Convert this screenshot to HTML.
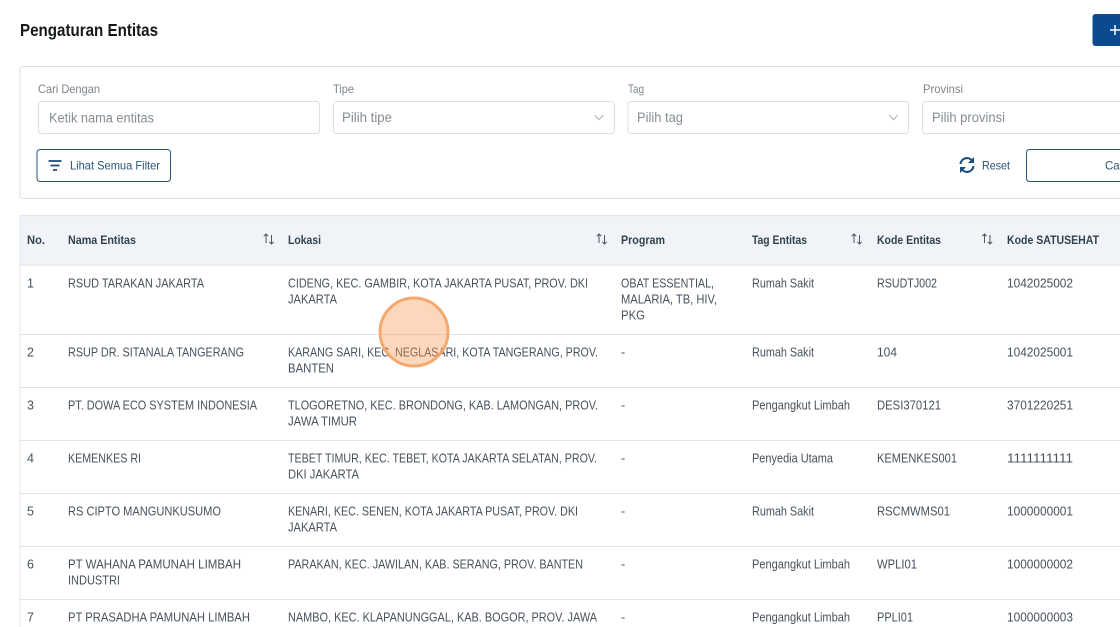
<!DOCTYPE html>
<html><head><meta charset="utf-8"><style>
html,body{margin:0;padding:0;background:#fff;width:1120px;height:627px;overflow:hidden}
svg{display:block;filter:blur(.3px)}
text{font-family:"Liberation Sans",sans-serif}
.t{font-size:12.5px;fill:#47525c}
.h{font-size:12px;font-weight:bold;fill:#33414e}
.l{font-size:12px;fill:#7d858c}
.p{font-size:13.5px;fill:#868d93}
.b{font-size:12px;fill:#2a5478}
</style></head><body>
<svg width="1120" height="627" viewBox="0 0 1120 627" xmlns="http://www.w3.org/2000/svg">
<text x="20" y="36" font-size="17.5" font-weight="bold" fill="#16191c" textLength="138" lengthAdjust="spacingAndGlyphs">Pengaturan Entitas</text>
<rect x="1092.5" y="14" width="60" height="32" rx="3" fill="#0b4a8c"/>
<path d="M1115 25v10M1110 30h10" stroke="#fff" stroke-width="1.5" fill="none"/>

<rect x="20" y="66.5" width="1140" height="132" rx="3" fill="#fff" stroke="#dcdfe2"/>
<text class="l" x="38" y="93" textLength="62" lengthAdjust="spacingAndGlyphs">Cari Dengan</text>
<text class="l" x="333" y="93" textLength="21" lengthAdjust="spacingAndGlyphs">Tipe</text>
<text class="l" x="628" y="93" textLength="16" lengthAdjust="spacingAndGlyphs">Tag</text>
<text class="l" x="923" y="93" textLength="40" lengthAdjust="spacingAndGlyphs">Provinsi</text>
<rect x="38.5" y="101.5" width="281" height="32" rx="3" fill="#fff" stroke="#dcdfe2"/>
<rect x="333.5" y="101.5" width="281" height="32" rx="3" fill="#fff" stroke="#dcdfe2"/>
<rect x="628" y="101.5" width="280.5" height="32" rx="3" fill="#fff" stroke="#dcdfe2"/>
<rect x="922.5" y="101.5" width="280" height="32" rx="3" fill="#fff" stroke="#dcdfe2"/>
<text class="p" x="49" y="122.5" textLength="105" lengthAdjust="spacingAndGlyphs">Ketik nama entitas</text>
<text class="p" x="342" y="122" textLength="50" lengthAdjust="spacingAndGlyphs">Pilih tipe</text>
<text class="p" x="637" y="122" textLength="46" lengthAdjust="spacingAndGlyphs">Pilih tag</text>
<text class="p" x="932" y="122" textLength="73" lengthAdjust="spacingAndGlyphs">Pilih provinsi</text>
<path d="M594.5 115l4.5 4.5 4.5-4.500M889 115l4.5 4.5 4.5-4.500" stroke="#b4b9bd" stroke-width="1.2" fill="none"/>

<rect x="37" y="149.5" width="133.5" height="32" rx="3" fill="#fff" stroke="#2a5478" stroke-width="1"/>
<path d="M48.500 161h13M50.500 165.500h9M53 170h4" stroke="#1d4a72" stroke-width="1.8" fill="none"/>
<text class="b" x="70" y="169.500" textLength="90" lengthAdjust="spacingAndGlyphs">Lihat Semua Filter</text>
<path d="M960.500 164a6.500 6.500 0 0 1 11.500-3.500M973.500 166a6.500 6.500 0 0 1-11.500 3.500" stroke="#17507f" stroke-width="2.1" fill="none"/>
<path d="M974 157v6h-6zM960 173v-6h6z" fill="#17507f"/>
<text class="b" x="982" y="169.500" textLength="28" lengthAdjust="spacingAndGlyphs">Reset</text>
<rect x="1026.500" y="149.500" width="140" height="32" rx="3" fill="#fff" stroke="#2a5478" stroke-width="1"/>
<text class="b" x="1105" y="169.500" textLength="21" lengthAdjust="spacingAndGlyphs">Cari</text>

<rect x="20" y="216" width="1100" height="49" fill="#f0f4f8"/>
<path d="M20 215.500H1120M20 265H1120" stroke="#e3e6e9" stroke-width="1.200" fill="none"/>
<path d="M20 216V627" stroke="#e6e8ea" fill="none"/>
<path d="M20 334.500H1120M20 387.500H1120M20 440.500H1120M20 493.500H1120M20 546.500H1120M20 599.500H1120" stroke="#e0e3e5" fill="none"/>

<text class="h" x="27" y="244" textLength="18" lengthAdjust="spacingAndGlyphs">No.</text>
<text class="h" x="68" y="244" textLength="68" lengthAdjust="spacingAndGlyphs">Nama Entitas</text>
<text class="h" x="288" y="244" textLength="33" lengthAdjust="spacingAndGlyphs">Lokasi</text>
<text class="h" x="621" y="244" textLength="44" lengthAdjust="spacingAndGlyphs">Program</text>
<text class="h" x="752" y="244" textLength="55" lengthAdjust="spacingAndGlyphs">Tag Entitas</text>
<text class="h" x="877" y="244" textLength="64" lengthAdjust="spacingAndGlyphs">Kode Entitas</text>
<text class="h" x="1007" y="244" textLength="92" lengthAdjust="spacingAndGlyphs">Kode SATUSEHAT</text>
<g stroke="#4a5560" stroke-width="1" fill="none">
<path d="M266 243V234M263.800 236.200L266 234l2.200 2.200M271.500 235v9M269.300 241.800L271.500 244l2.200-2.200"/>
<path d="M599 243V234M596.800 236.200L599 234l2.200 2.200M604.500 235v9M602.300 241.800L604.500 244l2.200-2.200"/>
<path d="M854 243V234M851.800 236.200L854 234l2.200 2.200M859.500 235v9M857.300 241.800L859.500 244l2.200-2.200"/>
<path d="M984.500 243V234M982.300 236.200L984.500 234l2.200 2.200M990 235v9M987.800 241.800L990 244l2.200-2.200"/>
</g>

<text class="t" x="27" y="287.500">1</text>
<text class="t" x="68" y="287.500" textLength="136" lengthAdjust="spacingAndGlyphs">RSUD TARAKAN JAKARTA</text>
<text class="t" x="288" y="287.500" textLength="300" lengthAdjust="spacingAndGlyphs">CIDENG, KEC. GAMBIR, KOTA JAKARTA PUSAT, PROV. DKI</text>
<text class="t" x="288" y="303.500" textLength="49" lengthAdjust="spacingAndGlyphs">JAKARTA</text>
<text class="t" x="621" y="287.500" textLength="93" lengthAdjust="spacingAndGlyphs">OBAT ESSENTIAL,</text>
<text class="t" x="621" y="303.500" textLength="96" lengthAdjust="spacingAndGlyphs">MALARIA, TB, HIV,</text>
<text class="t" x="621" y="319.500" textLength="24" lengthAdjust="spacingAndGlyphs">PKG</text>
<text class="t" x="752" y="287.500" textLength="62" lengthAdjust="spacingAndGlyphs">Rumah Sakit</text>
<text class="t" x="877" y="287.500" textLength="60" lengthAdjust="spacingAndGlyphs">RSUDTJ002</text>
<text class="t" x="1007" y="287.500" textLength="66" lengthAdjust="spacingAndGlyphs">1042025002</text>

<text class="t" x="27" y="356.500">2</text>
<text class="t" x="68" y="356.500" textLength="176" lengthAdjust="spacingAndGlyphs">RSUP DR. SITANALA TANGERANG</text>
<text class="t" x="288" y="356.500" textLength="310" lengthAdjust="spacingAndGlyphs">KARANG SARI, KEC. NEGLASARI, KOTA TANGERANG, PROV.</text>
<text class="t" x="288" y="372.500" textLength="46" lengthAdjust="spacingAndGlyphs">BANTEN</text>
<text class="t" x="621" y="356.500">-</text>
<text class="t" x="752" y="356.500" textLength="62" lengthAdjust="spacingAndGlyphs">Rumah Sakit</text>
<text class="t" x="877" y="356.500" textLength="20" lengthAdjust="spacingAndGlyphs">104</text>
<text class="t" x="1007" y="356.500" textLength="66" lengthAdjust="spacingAndGlyphs">1042025001</text>

<text class="t" x="27" y="409.500">3</text>
<text class="t" x="68" y="409.500" textLength="189" lengthAdjust="spacingAndGlyphs">PT. DOWA ECO SYSTEM INDONESIA</text>
<text class="t" x="288" y="409.500" textLength="310" lengthAdjust="spacingAndGlyphs">TLOGORETNO, KEC. BRONDONG, KAB. LAMONGAN, PROV.</text>
<text class="t" x="288" y="425.500" textLength="69" lengthAdjust="spacingAndGlyphs">JAWA TIMUR</text>
<text class="t" x="621" y="409.500">-</text>
<text class="t" x="752" y="409.500" textLength="98" lengthAdjust="spacingAndGlyphs">Pengangkut Limbah</text>
<text class="t" x="877" y="409.500" textLength="64" lengthAdjust="spacingAndGlyphs">DESI370121</text>
<text class="t" x="1007" y="409.500" textLength="66" lengthAdjust="spacingAndGlyphs">3701220251</text>

<text class="t" x="27" y="462.500">4</text>
<text class="t" x="68" y="462.500" textLength="73" lengthAdjust="spacingAndGlyphs">KEMENKES RI</text>
<text class="t" x="288" y="462.500" textLength="309" lengthAdjust="spacingAndGlyphs">TEBET TIMUR, KEC. TEBET, KOTA JAKARTA SELATAN, PROV.</text>
<text class="t" x="288" y="478.500" textLength="71" lengthAdjust="spacingAndGlyphs">DKI JAKARTA</text>
<text class="t" x="621" y="462.500">-</text>
<text class="t" x="752" y="462.500" textLength="81" lengthAdjust="spacingAndGlyphs">Penyedia Utama</text>
<text class="t" x="877" y="462.500" textLength="80" lengthAdjust="spacingAndGlyphs">KEMENKES001</text>
<text class="t" x="1007" y="462.500" textLength="66" lengthAdjust="spacingAndGlyphs">1111111111</text>

<text class="t" x="27" y="515.500">5</text>
<text class="t" x="68" y="515.500" textLength="153" lengthAdjust="spacingAndGlyphs">RS CIPTO MANGUNKUSUMO</text>
<text class="t" x="288" y="515.500" textLength="290" lengthAdjust="spacingAndGlyphs">KENARI, KEC. SENEN, KOTA JAKARTA PUSAT, PROV. DKI</text>
<text class="t" x="288" y="531.500" textLength="49" lengthAdjust="spacingAndGlyphs">JAKARTA</text>
<text class="t" x="621" y="515.500">-</text>
<text class="t" x="752" y="515.500" textLength="62" lengthAdjust="spacingAndGlyphs">Rumah Sakit</text>
<text class="t" x="877" y="515.500" textLength="73" lengthAdjust="spacingAndGlyphs">RSCMWMS01</text>
<text class="t" x="1007" y="515.500" textLength="66" lengthAdjust="spacingAndGlyphs">1000000001</text>

<text class="t" x="27" y="568.500">6</text>
<text class="t" x="68" y="568.500" textLength="173" lengthAdjust="spacingAndGlyphs">PT WAHANA PAMUNAH LIMBAH</text>
<text class="t" x="68" y="584.500" textLength="52" lengthAdjust="spacingAndGlyphs">INDUSTRI</text>
<text class="t" x="288" y="568.500" textLength="295" lengthAdjust="spacingAndGlyphs">PARAKAN, KEC. JAWILAN, KAB. SERANG, PROV. BANTEN</text>
<text class="t" x="621" y="568.500">-</text>
<text class="t" x="752" y="568.500" textLength="98" lengthAdjust="spacingAndGlyphs">Pengangkut Limbah</text>
<text class="t" x="877" y="568.500" textLength="40" lengthAdjust="spacingAndGlyphs">WPLI01</text>
<text class="t" x="1007" y="568.500" textLength="66" lengthAdjust="spacingAndGlyphs">1000000002</text>

<text class="t" x="27" y="621.500">7</text>
<text class="t" x="68" y="621.500" textLength="182" lengthAdjust="spacingAndGlyphs">PT PRASADHA PAMUNAH LIMBAH</text>
<text class="t" x="288" y="621.500" textLength="309" lengthAdjust="spacingAndGlyphs">NAMBO, KEC. KLAPANUNGGAL, KAB. BOGOR, PROV. JAWA</text>
<text class="t" x="621" y="621.500">-</text>
<text class="t" x="752" y="621.500" textLength="98" lengthAdjust="spacingAndGlyphs">Pengangkut Limbah</text>
<text class="t" x="877" y="621.500" textLength="36" lengthAdjust="spacingAndGlyphs">PPLI01</text>
<text class="t" x="1007" y="621.500" textLength="66" lengthAdjust="spacingAndGlyphs">1000000003</text>

<circle cx="414" cy="332" r="34" fill="rgba(248,150,80,0.38)" stroke="rgba(243,165,105,0.95)" stroke-width="3"/>
</svg>
</body></html>
